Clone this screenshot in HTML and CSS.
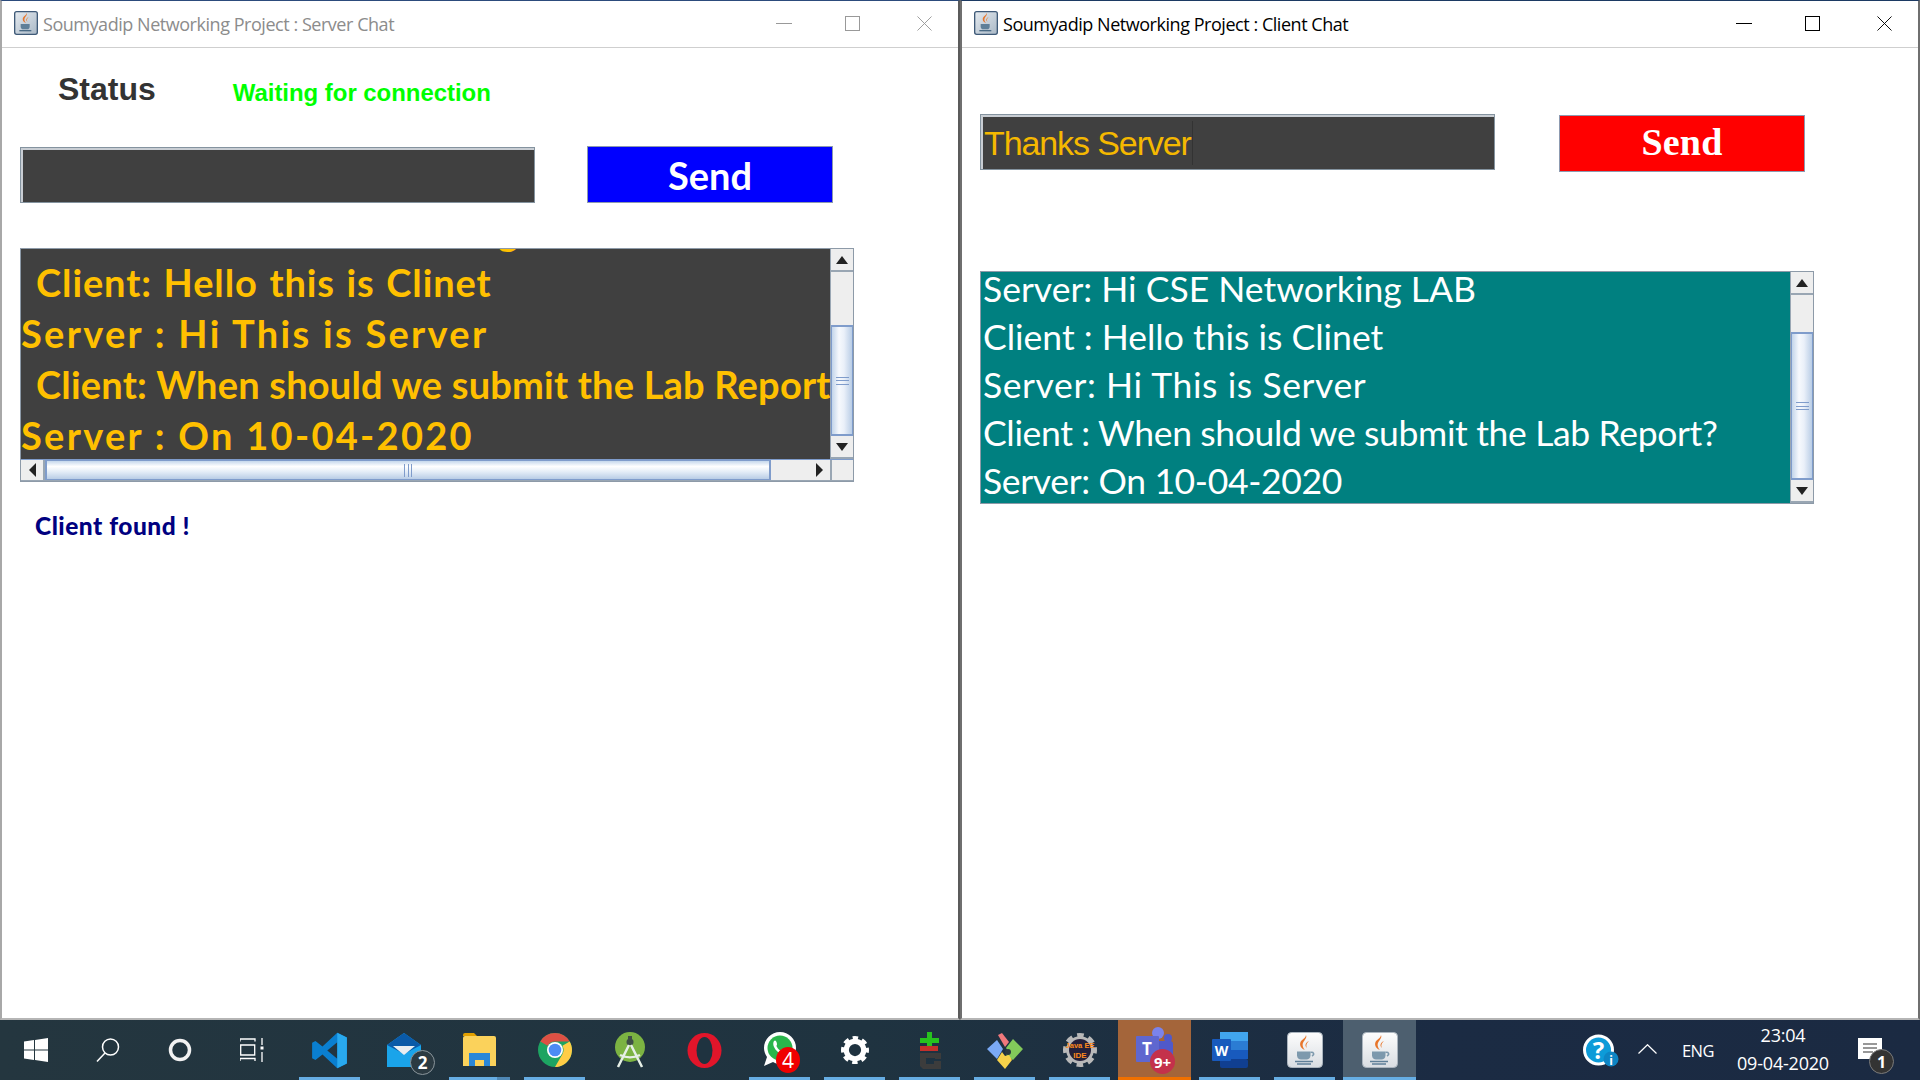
FILE: index.html
```html
<!DOCTYPE html>
<html lang="en">
<head>
<meta charset="utf-8">
<title>Soumyadip Networking Project</title>
<link rel="stylesheet" href="styles.css">
</head>
<body>
<svg class="sprite" aria-hidden="true">
  <defs>
    <linearGradient id="tile" x1="0" y1="0" x2="0" y2="1"><stop offset="0" stop-color="#fdfdfd"/><stop offset="1" stop-color="#d9dde2"/></linearGradient>
    <linearGradient id="tile-dark" x1="0" y1="0" x2="1" y2="1"><stop offset="0" stop-color="#e6ebf0"/><stop offset="1" stop-color="#a9b8c6"/></linearGradient>
    <symbol id="java" viewBox="0 0 36 36">
      <rect x="0.5" y="0.5" width="35" height="35" rx="4" fill="url(#tile)" stroke="#aab4be"/>
      <path d="M19 3c2 4-5 6.500-3 12 .6 1.500 1.400 2.500 2 3-3-1-6-4-4.500-8C15 7 18.500 6.500 19 3z" fill="#e8762b"/>
      <path d="M22 9c-2 2-3.500 4-2 7-2-1.500-2.500-5 2-7z" fill="#e8762b"/>
      <path d="M10 19.500h13.500v4c0 2.500-2 4-4 4h-5.500c-2 0-4-1.500-4-4z" fill="#7d99ad"/>
      <path d="M23.500 20.500c3-.8 4.500 1.800 1.500 3.500" fill="none" stroke="#7d99ad" stroke-width="1.500"/>
      <path d="M8 29.500h18M10 32h14" stroke="#5f7f98" stroke-width="1.500"/>
    </symbol>
    <symbol id="java-small" viewBox="0 0 36 36">
      <rect x="1" y="1" width="34" height="34" rx="3" fill="url(#tile-dark)" stroke="#3f5a78" stroke-width="2"/>
      <path d="M19 3c2 4-5 6.500-3 12 .6 1.500 1.400 2.500 2 3-3-1-6-4-4.500-8C15 7 18.500 6.500 19 3z" fill="#e8762b"/>
      <path d="M22 9c-2 2-3.500 4-2 7-2-1.500-2.500-5 2-7z" fill="#e8762b"/>
      <path d="M10 19.500h13.500v4c0 2.500-2 4-4 4h-5.500c-2 0-4-1.500-4-4z" fill="#5f7f98"/>
      <path d="M8 29.500h18" stroke="#4a6a85" stroke-width="2"/>
    </symbol>
    <symbol id="gear" viewBox="0 0 32 32">
      <circle cx="16" cy="16" r="10" fill="none" stroke="currentColor" stroke-width="6"/>
      <circle cx="16" cy="16" r="13.500" fill="none" stroke="currentColor" stroke-width="5" stroke-dasharray="6 4.600" stroke-dashoffset="3"/>
    </symbol>
  </defs>
</svg>

<main class="desktop">
  <section class="win win-inactive">
    <header class="titlebar">
      <svg class="title-icon"><use href="#java-small"/></svg>
      <span class="title-text">Soumyadip Networking Project : Server Chat</span>
      <div class="controls">
        <span class="ctl ctl-min"></span>
        <span class="ctl ctl-max"></span>
        <svg class="ctl-close" viewBox="0 0 16 16"><path d="M0.500 0.500l15 15M15.500 0.500l-15 15"/></svg>
      </div>
    </header>
    <div class="content">
      <div class="status-row">
        <span class="status-label">Status</span>
        <span class="status-value">Waiting for connection</span>
      </div>
      <div class="send-row send-row-server">
        <div class="field"></div>
        <button class="send send-blue">Send</button>
      </div>
      <div class="pane pane-server">
        <div class="pane-top">
          <div class="viewport view-dark">
            <div class="lines lines-dark">
              <p class="srv-first">Server : Hi CSE Networking LAB</p>
              <p class="in in-a">Client: Hello this is Clinet</p>
              <p class="srv">Server : Hi This is Server</p>
              <p class="in in-b">Client: When should we submit the Lab Report?</p>
              <p class="srv">Server : On 10-04-2020</p>
            </div>
          </div>
          <div class="vbar">
            <span class="sb-btn sb-v"><i class="arr arr-up"></i></span>
            <span class="track track-a"></span>
            <span class="thumb-v thumb-a"><i class="grip-v"></i></span>
            <span class="sb-btn sb-v"><i class="arr arr-down"></i></span>
          </div>
        </div>
        <div class="hbar">
          <span class="sb-btn sb-h"><i class="arr arr-left"></i></span>
          <span class="thumb-h"><i class="grip-h"></i></span>
          <span class="track track-h"></span>
          <span class="sb-btn sb-h"><i class="arr arr-right"></i></span>
          <span class="corner"></span>
        </div>
      </div>
      <p class="found">Client found !</p>
    </div>
  </section>

  <section class="win">
    <header class="titlebar">
      <svg class="title-icon"><use href="#java-small"/></svg>
      <span class="title-text">Soumyadip Networking Project : Client Chat</span>
      <div class="controls">
        <span class="ctl ctl-min"></span>
        <span class="ctl ctl-max"></span>
        <svg class="ctl-close" viewBox="0 0 16 16"><path d="M0.500 0.500l15 15M15.500 0.500l-15 15"/></svg>
      </div>
    </header>
    <div class="content">
      <div class="send-row send-row-client">
        <div class="field"><span class="field-text">Thanks Server</span><i class="caret"></i></div>
        <button class="send send-red">Send</button>
      </div>
      <div class="pane pane-client">
        <div class="pane-top">
          <div class="viewport view-teal">
            <div class="lines lines-teal">
              <p>Server: Hi CSE Networking LAB</p>
              <p>Client : Hello this is Clinet</p>
              <p class="t-wide">Server: Hi This is Server</p>
              <p class="t-tight">Client : When should we submit the Lab Report?</p>
              <p class="t-tight">Server: On 10-04-2020</p>
            </div>
          </div>
          <div class="vbar">
            <span class="sb-btn sb-v"><i class="arr arr-up"></i></span>
            <span class="track track-b"></span>
            <span class="thumb-v thumb-b"><i class="grip-v"></i></span>
            <span class="sb-btn sb-v"><i class="arr arr-down"></i></span>
          </div>
        </div>
      </div>
    </div>
  </section>
</main>

<footer class="taskbar">
  <div class="tb-left">
    <span class="tb-sys"><svg width="24" height="24" viewBox="0 0 24 24" fill="#fff"><path d="M0 3.500l10-1.400v9.300H0zM11 2L24 0v11.400H11zM0 12.500h10v9.400L0 20.500zM11 12.500h13V24l-13-1.900z"/></svg></span>
    <span class="tb-sys"><svg width="24" height="24" viewBox="0 0 24 24" fill="none" stroke="#fff" stroke-width="1.500"><circle cx="14.500" cy="9" r="8"/><path d="M9 15L1 23.500"/></svg></span>
    <span class="tb-sys"><svg width="24" height="24" viewBox="0 0 24 24" fill="none" stroke="#f2f2f2" stroke-width="3.500"><circle cx="12" cy="12" r="9.500"/></svg></span>
    <span class="tb-sys"><svg width="24" height="24" viewBox="0 0 24 24" fill="none" stroke="#fff" stroke-width="1.300"><path d="M0 3.500V1h15v2.500M0.700 7h14v10h-14zM0 23v-2.500h15V23M22 0v7M22 14v10"/><rect x="20.500" y="8.500" width="3" height="3" fill="#fff" stroke="none"/></svg></span>
  </div>
  <div class="tb-apps">
    <span class="app on"><svg width="37" height="37" viewBox="0 0 100 100"><path fill-rule="evenodd" fill="#0a7fd0" d="M71 2L97 15V85L71 98L31 61L12 76L3 71V29L12 24L31 39ZM71 28L44 50L71 72Z"/><path fill="#29a9ee" d="M71 2L97 15V85L71 98V72V28Z"/></svg></span>
    <span class="app">
      <svg class="shift-mail" width="36" height="36" viewBox="0 0 36 36"><path d="M18 1L35 13V35H1V13z" fill="#1aa4ea"/><path d="M18 1L35 13 18 22 1 13z" fill="#0a5aa8"/><path d="M7 14L29 14 18 23z" fill="#e8eef2"/></svg>
      <b class="badge badge-dark">2</b>
    </span>
    <span class="app on on-split"><svg width="33" height="34" viewBox="0 0 33 34"><path d="M0 2a2 2 0 0 1 2-2h9l3 3h-14z" fill="#e2a000"/><rect y="3" width="33" height="30" rx="2" fill="#fbd25b"/><path d="M0 33V12h33v21z" fill="#fbd25b"/><path d="M6 33V20h21v13h-6v-6h-9v6z" fill="#2a87d8"/></svg></span>
    <span class="app on"><svg width="34" height="34" viewBox="0 0 34 34"><circle cx="17" cy="17" r="17" fill="#1da462"/><path d="M17 0a17 17 0 0 1 14.700 8.500H17a8.500 8.500 0 0 0-7.400 4.300L2.300 8.500A17 17 0 0 1 17 0z" fill="#dd5044"/><path d="M31.700 8.500A17 17 0 0 1 17 34l7.400-12.800A8.500 8.500 0 0 0 24.400 12.800z" fill="#ffcd46"/><circle cx="17" cy="17" r="8" fill="#fff"/><circle cx="17" cy="17" r="6.300" fill="#4c8bf5"/></svg></span>
    <span class="app"><svg width="30" height="36" viewBox="0 0 30 36"><circle cx="15" cy="15" r="15" fill="#7cb342"/><circle cx="15" cy="10" r="3.500" fill="#3f4f46"/><rect x="13" y="4" width="4" height="6" fill="#3f4f46"/><path d="M14 13L3 35M16 13l11 22M5 23c6 3 14 3 20 0" fill="none" stroke="#e6efe6" stroke-width="2.500"/></svg></span>
    <span class="app"><svg width="35" height="35" viewBox="0 0 35 35"><ellipse cx="17.500" cy="17.500" rx="17" ry="17.500" fill="#e2152a"/><ellipse cx="17.500" cy="17.500" rx="8" ry="13.500" fill="#1f3340"/></svg></span>
    <span class="app on">
      <svg width="33" height="36" viewBox="0 0 33 36"><path d="M17 0a16 16 0 0 1 0 32c-3 0-5-.8-7-2L1 34l3-9C2 22 1 19 1 16A16 16 0 0 1 17 0z" fill="#fff"/><circle cx="17" cy="16" r="12.500" fill="#2ab54b"/><path d="M11 9c2-2 3 2 3 3 0 2-1 1 0 3s3 4 4 3 2-1 4 1c1 1 0 3-2 3-5 0-12-8-9-13z" fill="#fff"/></svg>
      <b class="badge badge-red">4</b>
    </span>
    <span class="app on"><svg class="gear-white" width="28" height="28"><use href="#gear"/></svg></span>
    <span class="app on"><svg width="22" height="37" viewBox="0 0 22 37"><path d="M8 0h5v6h7v5h-7v5H8v-5H1V6h7z" fill="#27c21e"/><rect x="1" y="14" width="18" height="5" fill="#c4302b"/><path d="M1 21h21v6h-6v-1H7v6h8v-3h7v8H4l-3-3z" fill="#3c3c3c"/></svg></span>
    <span class="app on"><svg width="36" height="37" viewBox="0 0 36 37"><path d="M11 3l4-2 7 9-4 5z" fill="#f0787c"/><path d="M0 17L10 8l6 9-6 10z" fill="#7aa9f5"/><path d="M26 7l10 10-10 11-7-5 3-3-3-4z" fill="#82c95a"/><path d="M10 28l5-8 3 4 4-1 3 5-7 9z" fill="#f6d24a"/><circle cx="21" cy="20" r="3" fill="#2a3a40"/></svg></span>
    <span class="app on">
      <svg class="gear-grey" width="34" height="36" viewBox="0 0 34 36"><use href="#gear" width="34" height="36"/><circle cx="17" cy="18" r="11" fill="#24203a"/><text class="ee1" x="17" y="16" text-anchor="middle">Java EE</text><text class="ee2" x="17" y="26" text-anchor="middle">IDE</text></svg>
    </span>
    <span class="app app-hot">
      <svg width="38" height="46" viewBox="0 0 38 46"><circle cx="22" cy="6" r="6" fill="#7b83eb"/><circle cx="32" cy="11" r="4" fill="#5059c9"/><rect x="16" y="14" width="21" height="20" rx="3" fill="#5059c9"/><rect x="0" y="9" width="23" height="26" rx="1" fill="#5f67cf"/><text class="teams-t" x="11" y="28" text-anchor="middle">T</text></svg>
      <b class="badge badge-teams">9+</b>
    </span>
    <span class="app on"><svg width="36" height="36" viewBox="0 0 36 36"><rect x="8" y="0" width="28" height="9" fill="#41a5ee"/><rect x="8" y="9" width="28" height="9" fill="#2b7cd3"/><rect x="8" y="18" width="28" height="9" fill="#185abd"/><rect x="8" y="27" width="28" height="9" rx="2" fill="#103f91"/><rect x="0" y="7" width="19" height="22" rx="1" fill="#185abd"/><text class="word-w" x="9.500" y="24" text-anchor="middle">W</text></svg></span>
    <span class="app on"><svg width="36" height="36"><use href="#java"/></svg></span>
    <span class="app on app-active"><svg width="36" height="36"><use href="#java"/></svg></span>
  </div>
  <div class="tray">
    <svg class="tray-help" width="36" height="33" viewBox="0 0 36 33"><circle cx="15.500" cy="16" r="14" fill="#0d9bd8" stroke="#fff" stroke-width="3"/><text class="help-q" x="15.500" y="25" text-anchor="middle">?</text><circle cx="28" cy="25" r="7.500" fill="#0d85c4"/><text class="help-i" x="28" y="31" text-anchor="middle">i</text></svg>
    <svg class="tray-chev" width="19" height="10" viewBox="0 0 19 10"><path d="M0.500 9.500L9.500 0.700l9 8.800" fill="none" stroke="#fff" stroke-width="1.200"/></svg>
    <span class="tray-lang">ENG</span>
    <div class="clock"><span>23:04</span><span>09-04-2020</span></div>
    <div class="notify">
      <svg width="24" height="28" viewBox="0 0 24 28"><path d="M0 0h24v21H16l-4 5v-5H0z" fill="#fff"/><path d="M5 6h14M5 10h14M5 14h10" stroke="#333" stroke-width="1.200"/></svg>
      <b class="badge badge-note">1</b>
    </div>
  </div>
</footer>
</body>
</html>
```

FILE: styles.css
```css
* { box-sizing: border-box; }
html, body { margin: 0; padding: 0; }
body { width: 1920px; height: 1080px; overflow: hidden; background: #fff; font-family: "Liberation Sans", Arial, sans-serif; display: flex; flex-direction: column; }
p { margin: 0; }
.sprite { width: 0; height: 0; display: block; position: absolute; }

.desktop { display: flex; height: 1020px; }
.win { width: 960px; height: 1020px; display: flex; flex-direction: column; background: #fff; border-left: 2px solid #6f6f6f; border-right: 2px solid #6f6f6f; border-bottom: 2px solid #b5b5b5; border-top: 1px solid #1c3a63; }
.win-inactive { border-left-color: #a8a8a8; border-right-color: #5b5b5b; border-top-color: #2c4b7c; }

.titlebar { height: 47px; flex: none; display: flex; align-items: center; border-bottom: 1px solid #cfcfcf; padding: 0 0 0 12px; color: #000; }
.title-icon { width: 24px; height: 24px; flex: none; margin-top: -2px; }
.title-text { margin-left: 5px; font: 18px "Open Sans", sans-serif; letter-spacing: -0.46px; white-space: nowrap; margin-top: -1px; }
.win-inactive .title-text { color: #8c8c8c; }
.controls { margin-left: auto; display: flex; align-items: center; height: 100%; }
.ctl-min { width: 16px; height: 1px; background: #000; margin-right: 53px; margin-top: -2px; }
.ctl-max { width: 15px; height: 15px; border: 1px solid #000; margin-right: 57px; margin-top: -2px; }
.ctl-close { width: 15px; height: 15px; margin-right: 26px; margin-top: -2px; fill: none; stroke: #000; stroke-width: 1; }
.win-inactive .ctl-min { background: #999; }
.win-inactive .ctl-max { border-color: #999; }
.win-inactive .ctl-close { stroke: #999; }

.content { flex: 1; padding-left: 18px; display: flex; flex-direction: column; align-items: flex-start; }

.status-row { height: 98px; width: 100%; padding: 23px 0 0 38px; display: flex; align-items: baseline; gap: 77px; }
.status-label { font-size: 32px; font-weight: 700; color: #333; }
.status-value { font-size: 24px; font-weight: 700; color: #00ff00; letter-spacing: -0.05px; transform: translateY(1px); }

.send-row { display: flex; align-items: flex-start; height: 57px; }
.send-row-server { gap: 52px; margin-bottom: 45px; }
.send-row-client { gap: 64px; margin-top: 66px; margin-bottom: 100px; }
.field { width: 515px; height: 56px; background: #404040; border: 1px solid #84939f; box-shadow: inset 2px 2px 0 #c8cdd3; display: flex; align-items: center; padding: 2px 0 0 3px; }
.send-row-server .field { margin-top: 1px; }
.field-text { font-size: 34px; color: #f5b800; line-height: 1; letter-spacing: -1.1px; }
.caret { width: 1px; height: 44px; background: #333; margin-left: 1px; }
.send { width: 246px; height: 57px; padding: 0; color: #fff; border: 1px solid #8d9ab0; cursor: default; }
.send-blue { background: #0000ff; font: 700 38px "Lato", sans-serif; letter-spacing: 0; }
.send-red { background: #ff0000; font: 700 38px "Liberation Serif", serif; margin-top: 1px; letter-spacing: 0.2px; padding-bottom: 3px; }

.pane { border: 1px solid #8d9aa8; background: #eee; display: flex; flex-direction: column; }
.pane-server { width: 834px; height: 234px; }
.pane-client { width: 834px; height: 233px; }
.pane-top { display: flex; flex: 1; min-height: 0; }
.viewport { flex: 1; overflow: hidden; min-width: 0; }
.view-dark { background: #404040; }
.view-teal { background: #008080; }
.lines { white-space: nowrap; font-family: "Lato", sans-serif; }
.lines p { height: 51px; line-height: 51px; }
.lines-dark { color: #ffc000; font-size: 38px; font-weight: 700; margin-top: -43px; }
.lines-dark .srv-first { letter-spacing: 1.4px; }
.lines-dark .srv { letter-spacing: 2.3px; }
.lines-dark .in { padding-left: 15px; }
.lines-dark .in-a { letter-spacing: 0.9px; word-spacing: 1.500px; }
.lines-dark .in-b { letter-spacing: 0.2px; }
.lines-teal { color: #fff; font-size: 35.500px; padding-left: 2px; }
.lines-teal p { height: 48px; line-height: 34px; }
.lines-teal .t-wide { letter-spacing: 0.6px; }
.lines-teal .t-tight { letter-spacing: -0.35px; }

.vbar { width: 23px; flex: none; display: flex; flex-direction: column; border-left: 1px solid #9aa7b4; }
.sb-btn { background: #eee; display: flex; align-items: center; justify-content: center; flex: none; }
.sb-v { height: 23px; border-bottom: 2px solid #99a6b3; }
.sb-h { width: 24px; border-right: 2px solid #99a6b3; }
.track { background: #eeeeee; display: block; }
.track-a { height: 53px; flex: none; }
.track-b { height: 37px; flex: none; }
.track-h { width: 37px; flex: none; }
.thumb-v { flex: 1; background: linear-gradient(to right, #c3d5ea, #f6f9fd 35%, #eaf0f9 60%, #b9cde6); border: 1px solid #7f9ccb; border-width: 2px 1px; display: flex; align-items: center; justify-content: center; }
.thumb-h { width: 726px; flex: none; background: linear-gradient(to bottom, #c6d8ec, #ffffff 30%, #e4edf7 60%, #b9cde6); border: 1px solid #7f9ccb; border-width: 1px 2px; display: flex; align-items: center; justify-content: center; }
.grip-v { width: 13px; height: 8px; border-top: 1px solid #7f9ccb; border-bottom: 1px solid #7f9ccb; background: linear-gradient(#7f9ccb, #7f9ccb) center / 100% 1px no-repeat; }
.grip-h { width: 8px; height: 13px; border-left: 1px solid #7f9ccb; border-right: 1px solid #7f9ccb; background: linear-gradient(#7f9ccb, #7f9ccb) center / 1px 100% no-repeat; }
.arr { display: block; width: 0; height: 0; border-style: solid; border-color: transparent; }
.arr-up { border-width: 0 6px 8px; border-bottom-color: #222; }
.arr-down { border-width: 8px 6px 0; border-top-color: #222; }
.arr-left { border-width: 7px 7px 7px 0; border-right-color: #222; }
.arr-right { border-width: 7px 0 7px 7px; border-left-color: #222; }
.hbar { height: 22px; flex: none; display: flex; border-top: 1px solid #7f9ccb; border-bottom: 1px solid #99a6b3; }
.corner { flex: 1; background: #eee; }

.found { margin: 29px 0 0 15px; font: 900 24.500px "Lato", sans-serif; color: #000080; letter-spacing: 0.5px; }

.taskbar { height: 60px; flex: none; display: flex; align-items: stretch; background: linear-gradient(to right, #24363f, #1f3340 45%, #1b2b43 75%, #1b2a42); color: #fff; }
.tb-left { display: flex; width: 292px; flex: none; }
.tb-sys { width: 72px; display: flex; align-items: center; justify-content: center; }
.tb-apps { display: flex; flex: none; }
.app { width: 75px; position: relative; display: flex; align-items: center; justify-content: center; flex: none; }
.app.on::after { content: ""; position: absolute; left: 7px; right: 7px; bottom: 0; height: 3px; background: #66ade3; }
.app.on-split::before { content: ""; position: absolute; right: 7px; width: 13px; bottom: 0; height: 3px; background: #4f88b5; z-index: 1; }
.app-hot { background: #a4653a; margin: 0 1px; width: 73px; }
.app-hot::after { content: ""; position: absolute; left: 0; right: 0; bottom: 0; height: 3px; background: #f07000; }
.app-active { background: #4d5f6f; margin: 0 1px; width: 73px; }
.app-active.on::after { left: 0; right: 0; }
.gear-white { color: #fff; }
.gear-grey { color: #b9b9b9; }
.shift-mail { margin-left: -2px; }

.badge { position: absolute; display: flex; align-items: center; justify-content: center; border-radius: 50%; font-weight: 700; color: #fff; font-family: "Open Sans", sans-serif; }
.badge-dark { width: 25px; height: 25px; left: 43px; top: 30px; font-size: 17px; background: #2b3a42; border: 1px solid #8a959b; }
.badge-red { width: 24px; height: 26px; left: 34px; top: 27px; font-size: 21px; font-weight: 400; background: #f00000; }
.badge-teams { width: 25px; height: 25px; left: 32px; top: 29px; font-size: 15px; background: #c4314b; }
.badge-note { width: 25px; height: 25px; left: 11px; top: 21px; font-size: 16px; background: #333; border: 1px solid #7b7b7b; }
.ee1 { font: 700 7.500px "Liberation Sans", sans-serif; fill: #ff8a1c; }
.ee2 { font: 700 8px "Liberation Sans", sans-serif; fill: #ff8a1c; }
.teams-t { font: 700 17px "Open Sans", sans-serif; fill: #fff; }
.word-w { font: 700 14px "Open Sans", sans-serif; fill: #fff; }
.help-q { font: 700 24px "Open Sans", sans-serif; fill: #fff; }
.help-i { font: 700 12px "Open Sans", sans-serif; fill: #fff; }

.tray { margin-left: auto; padding-right: 24px; display: flex; align-items: center; }
.tray-help { margin-right: 19px; }
.tray-chev { margin-right: 25px; margin-top: -2px; }
.tray-lang { font: 16.500px "Open Sans", sans-serif; letter-spacing: -0.6px; width: 34px; margin-right: 20px; }
.clock { width: 94px; display: flex; flex-direction: column; align-items: center; font: 18px "Open Sans", sans-serif; letter-spacing: -0.2px; line-height: 28px; margin-right: 28px; margin-top: -2px; white-space: nowrap; }
.notify { width: 38px; height: 44px; padding-top: 10px; position: relative; }
```
